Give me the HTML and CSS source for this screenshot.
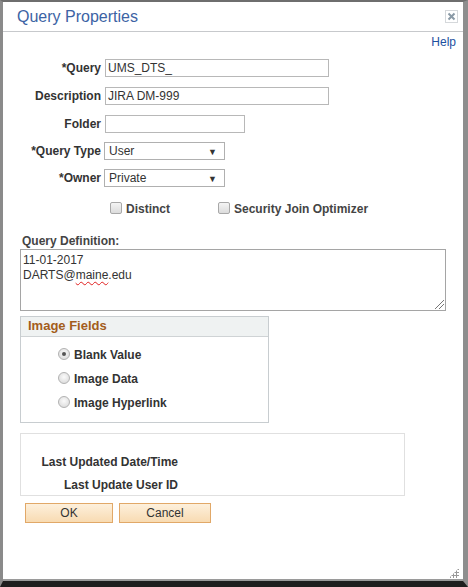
FILE: index.html
```html
<!DOCTYPE html>
<html>
<head>
<meta charset="utf-8">
<link rel="stylesheet" href="styles.css">
</head>
<body>
<div class="dialog">
  <div class="titlebar">
    <span class="title">Query Properties</span>
    <span class="close"><svg width="9" height="9" viewBox="0 0 9 9"><path d="M1.5 1.5 L7.5 7.5 M7.5 1.5 L1.5 7.5" stroke="#8a9aa6" stroke-width="2"/></svg></span>
  </div>
  <div class="content">
    <div class="helprow"><a class="help">Help</a></div>
    <div class="form">
      <label class="lbl">*Query</label><div class="field"><span class="input w-long">UMS_DTS_</span></div>
      <label class="lbl">Description</label><div class="field"><span class="input w-long">JIRA DM-999</span></div>
      <label class="lbl">Folder</label><div class="field"><span class="input w-short"></span></div>
      <label class="lbl">*Query Type</label><div class="field"><span class="select">User<span class="arrow">▼</span></span></div>
      <label class="lbl">*Owner</label><div class="field"><span class="select">Private<span class="arrow">▼</span></span></div>
    </div>
    <div class="checks">
      <span class="check"><span class="cb"></span>Distinct</span>
      <span class="check"><span class="cb"></span>Security Join Optimizer</span>
    </div>
    <div class="deflabel">Query Definition:</div>
    <div class="textarea">11-01-2017<br>DARTS@<span class="spell">maine</span>.edu<span class="grip"></span></div>
    <div class="group">
      <div class="group-head">Image Fields</div>
      <div class="group-body">
        <div class="radio"><span class="rb on"></span>Blank Value</div>
        <div class="radio"><span class="rb"></span>Image Data</div>
        <div class="radio"><span class="rb"></span>Image Hyperlink</div>
      </div>
    </div>
    <div class="updated">
      <div class="upd-row">Last Updated Date/Time</div>
      <div class="upd-row">Last Update User ID</div>
    </div>
    <div class="buttons">
      <span class="btn ok">OK</span>
      <span class="btn cancel">Cancel</span>
    </div>
  </div>
  <div class="resize"></div>
</div>
</body>
</html>
```
FILE: styles.css
```css
html, body {
  margin: 0;
  padding: 0;
  background: #fff;
}
body {
  width: 468px;
  height: 587px;
  overflow: hidden;
  font-family: "Liberation Sans", Arial, sans-serif;
}
.dialog {
  box-sizing: border-box;
  width: 468px;
  height: 587px;
  background: #fff;
  border-top: 2px solid #6e6e6e;
  border-left: 3px solid #8a8a8a;
  border-right: 5px solid #8e8e8e;
  border-bottom: 6px solid #1e1e1e;
  position: relative;
}
.dialog::after {
  content: "";
  position: absolute;
  left: 0;
  right: 0;
  bottom: 0;
  height: 2px;
  background: #9a9a9a;
}
.titlebar {
  height: 29px;
  border-bottom: 1px solid #c7c9cc;
  display: flex;
  align-items: center;
  justify-content: space-between;
  padding: 0 5px 0 14px;
}
.title {
  font-size: 16px;
  color: #3c63a4;
  margin-top: 1px;
}
.close {
  box-sizing: border-box;
  width: 13px;
  height: 13px;
  border: 1px solid #d5d8db;
  display: flex;
  align-items: center;
  justify-content: center;
}
.content {
  padding: 0 0 0 17px;
}
.helprow {
  display: flex;
  justify-content: flex-end;
  padding: 3px 7px 0 0;
  height: 15px;
}
.help {
  font-size: 12px;
  color: #1d50a0;
}
.form {
  display: grid;
  grid-template-columns: 81px auto;
  grid-template-rows: 27px 29px 27px 27px 27px;
  column-gap: 4px;
  margin-top: 4px;
}
.lbl {
  display: flex;
  align-items: center;
  justify-content: flex-end;
  font-size: 12px;
  font-weight: bold;
  color: #333;
}
.field {
  display: flex;
  align-items: center;
}
.input {
  box-sizing: border-box;
  height: 18px;
  border: 1px solid #b8b8b8;
  font-size: 12px;
  color: #333;
  padding: 1px 2px;
  line-height: 14px;
}
.w-long { width: 224px; }
.w-short { width: 140px; }
.select {
  box-sizing: border-box;
  position: relative;
  width: 121px;
  height: 18px;
  border: 1px solid #b0b0b0;
  font-size: 12px;
  color: #333;
  padding: 1px 4px;
  line-height: 14px;
  margin-left: -1px;
}
.arrow {
  position: absolute;
  right: 7px;
  top: 2px;
  font-size: 9px;
  color: #333;
}
.checks {
  display: flex;
  margin-top: 8px;
  margin-left: 90px;
  height: 20px;
  align-items: center;
}
.check {
  display: flex;
  align-items: center;
  font-size: 12px;
  font-weight: bold;
  color: #444;
}
.check + .check { margin-left: 48px; }
.cb {
  box-sizing: border-box;
  width: 12px;
  height: 12px;
  border: 1px solid #a8a8a8;
  border-radius: 2px;
  background: linear-gradient(#f4f4f4, #dcdcdc);
  margin-right: 4px;
  margin-top: -2px;
}
.deflabel {
  margin-top: 15px;
  font-size: 12px;
  font-weight: bold;
  color: #444;
  margin-left: 2px;
  height: 14px;
}
.textarea {
  box-sizing: border-box;
  position: relative;
  width: 426px;
  height: 62px;
  border: 1px solid #a5a5a5;
  font-size: 12px;
  color: #333;
  padding: 3px 2px;
  line-height: 15px;
  margin-top: 1px;
}
.spell {
  text-decoration: underline wavy #e02020;
  text-decoration-thickness: 1px;
  text-underline-offset: 2px;
}
.grip {
  position: absolute;
  right: 1px;
  bottom: 1px;
  width: 9px;
  height: 9px;
  background: linear-gradient(135deg, transparent 0 45%, #777 45% 52%, transparent 52% 70%, #777 70% 77%, transparent 77%);
}
.group {
  box-sizing: border-box;
  width: 249px;
  margin-top: 5px;
  border: 1px solid #c8cdd0;
}
.group-head {
  height: 19px;
  background: #eff2f2;
  border-bottom: 1px solid #cfd3d5;
  font-size: 13px;
  font-weight: bold;
  color: #a35d1c;
  padding-left: 7px;
  line-height: 18px;
}
.group-body {
  padding: 6px 0 7px 37px;
}
.radio {
  display: flex;
  align-items: center;
  font-size: 12px;
  font-weight: bold;
  color: #333;
  height: 24px;
}
.rb {
  box-sizing: border-box;
  width: 12px;
  height: 12px;
  border-radius: 50%;
  border: 1px solid #b2b2b2;
  background: radial-gradient(circle at 50% 40%, #fafafa, #d6d6d6);
  margin-right: 4px;
  margin-top: -2px;
  position: relative;
}
.rb.on::after {
  content: "";
  position: absolute;
  left: 3px;
  top: 3px;
  width: 4px;
  height: 4px;
  border-radius: 50%;
  background: #555;
}
.updated {
  box-sizing: border-box;
  width: 385px;
  height: 63px;
  margin-top: 10px;
  border: 1px solid #e0e0e0;
  padding-top: 21px;
}
.upd-row {
  width: 157px;
  text-align: right;
  font-size: 12px;
  font-weight: bold;
  color: #333;
  height: 23px;
  line-height: 14px;
}
.buttons {
  display: flex;
  margin-top: 7px;
  margin-left: 5px;
}
.btn {
  box-sizing: border-box;
  height: 20px;
  border: 1px solid #e1a868;
  background: linear-gradient(#fdf0dc, #f8dbb2);
  font-size: 12px;
  color: #333;
  display: flex;
  align-items: center;
  justify-content: center;
}
.ok { width: 88px; }
.cancel { width: 92px; margin-left: 6px; }
.resize {
  position: absolute;
  right: 4px;
  bottom: 3px;
  width: 10px;
  height: 10px;
  background:
    radial-gradient(circle, #999 1px, transparent 1.3px) 0 0 / 3px 3px;
  clip-path: polygon(100% 0, 100% 100%, 0 100%);
}
```
